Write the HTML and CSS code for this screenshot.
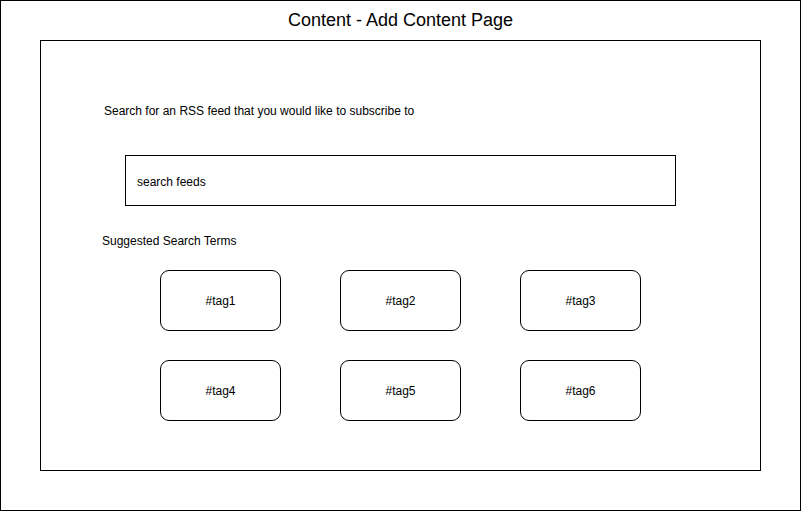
FILE: index.html
```html
<!DOCTYPE html>
<html>
<head>
<meta charset="utf-8">
<link rel="stylesheet" href="styles.css">
</head>
<body>
<div class="frame">
  <div class="title">Content - Add Content Page</div>
  <div class="panel">
    <div class="label">Search for an RSS feed that you would like to subscribe to</div>
    <div class="search">search feeds</div>
    <div class="suggest">Suggested Search Terms</div>
    <div class="tags">
      <div class="tag">#tag1</div>
      <div class="tag">#tag2</div>
      <div class="tag">#tag3</div>
      <div class="tag">#tag4</div>
      <div class="tag">#tag5</div>
      <div class="tag">#tag6</div>
    </div>
  </div>
</div>
</body>
</html>
```

FILE: styles.css
```css
* { box-sizing: border-box; }
html, body { margin: 0; padding: 0; background: #fff; }
body {
  font-family: "Liberation Sans", Arial, Helvetica, sans-serif;
  color: #000;
}
.frame {
  width: 801px;
  height: 511px;
  border: 1px solid #000;
}
.title {
  height: 39px;
  line-height: 39px;
  text-align: center;
  font-size: 18px;
}
.panel {
  margin-left: 39px;
  width: 721px;
  height: 431px;
  border: 1px solid #000;
  font-size: 12px;
}
.label {
  margin: 63px 0 0 63px;
  line-height: 14px;
}
.search {
  margin: 37px 0 0 84px;
  width: 551px;
  height: 51px;
  border: 1px solid #000;
  padding-left: 11px;
  display: flex;
  align-items: center;
  padding-top: 2px;
}
.suggest {
  margin: 28px 0 0 61px;
  line-height: 14px;
}
.tags {
  margin: 22px 0 0 119px;
  display: grid;
  grid-template-columns: repeat(3, 121px);
  column-gap: 59px;
  row-gap: 29px;
}
.tag {
  height: 61px;
  border: 1px solid #000;
  border-radius: 9px;
  display: flex;
  align-items: center;
  justify-content: center;
}
```
